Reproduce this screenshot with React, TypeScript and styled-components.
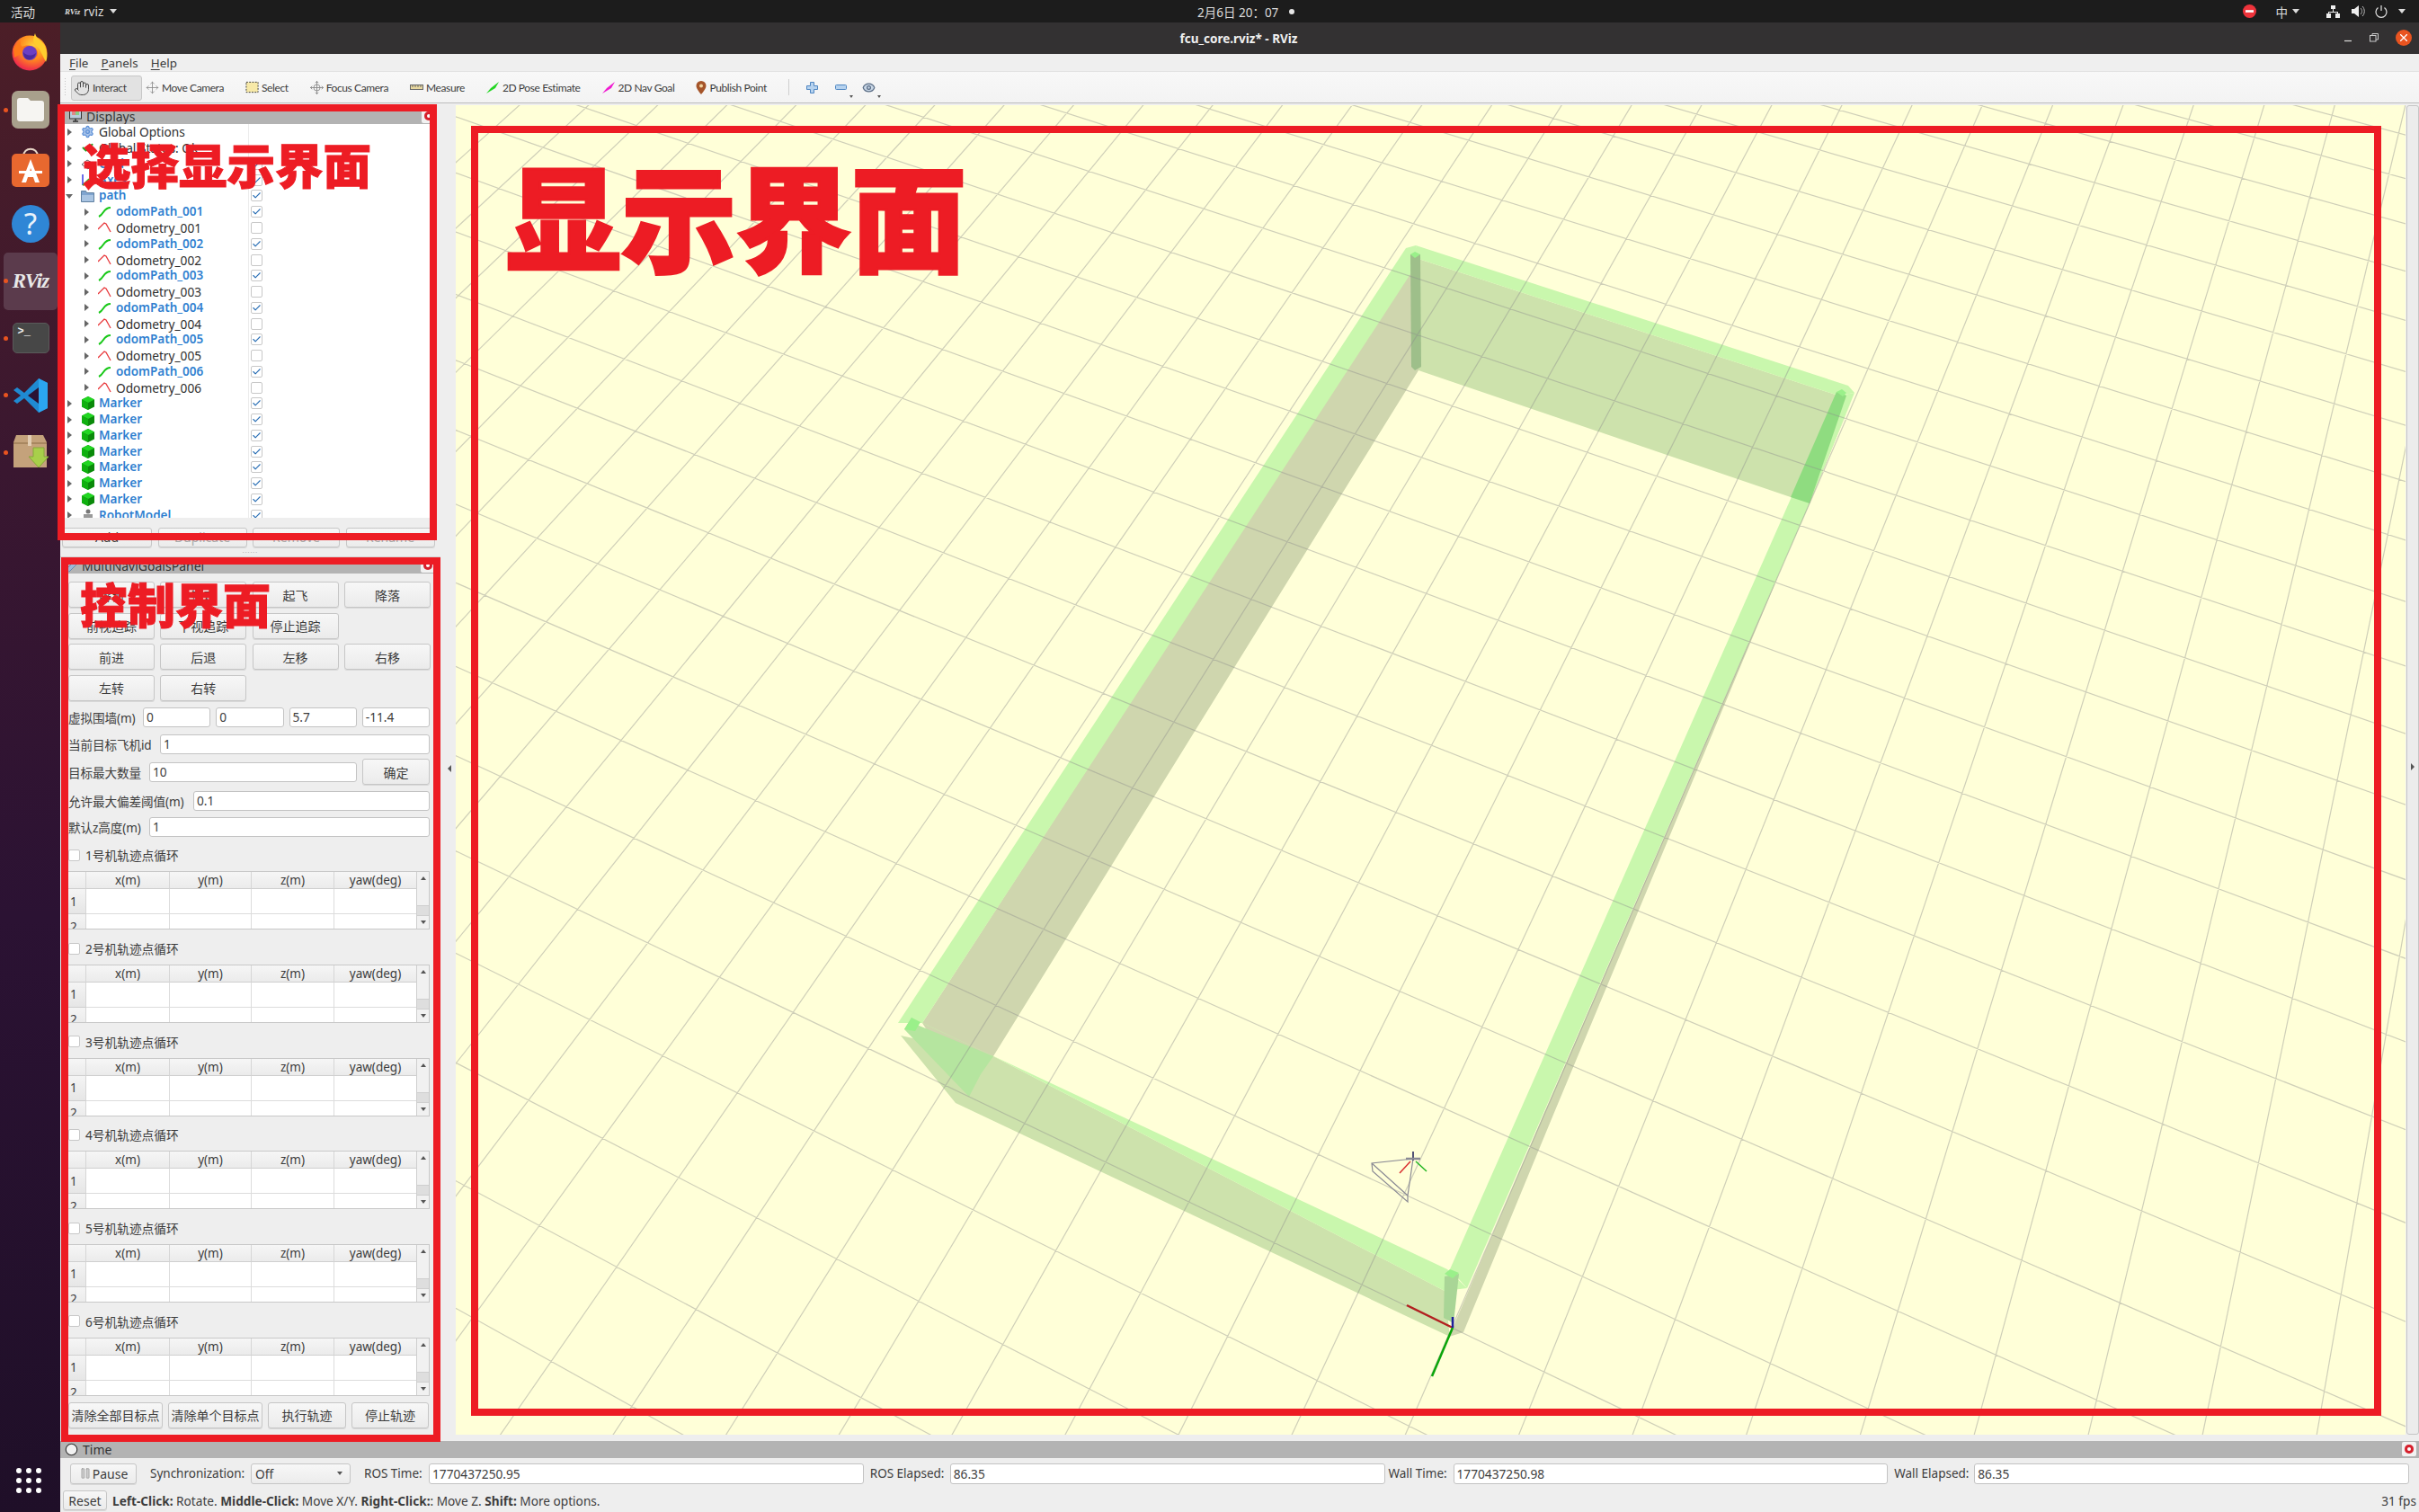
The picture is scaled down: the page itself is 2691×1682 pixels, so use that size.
import React from "react";
import styled, { createGlobalStyle } from "styled-components";
import { Settings, Check, Hand, Move, Eye, Clock, Pause } from "lucide-react";

const UI = `"Noto Sans", "Noto Sans CJK SC", sans-serif`;

const Global = createGlobalStyle`
  html, body { margin: 0; padding: 0; background: #eeeeee; overflow: hidden; }
  * { box-sizing: border-box; }
  body { font-family: ${UI}; color: #3c3c3c; font-size: 13.7px; }
`;

const Page = styled.div`
  position: relative; width: 2691px; height: 1682px; overflow: hidden;
  display: grid; grid-template-columns: 67px 1fr; grid-template-rows: 25px 1fr;
`;

/* ---------- GNOME top bar ---------- */
const TopBar = styled.div`
  grid-column: 1 / 3; background: #1c1c1c; color: #dcdcdc; display: flex; align-items: center;
  position: relative; font-size: 13.5px; padding-left: 12px;
`;
const AppName = styled.div`display: flex; align-items: center; margin-left: 33px; gap: 7px;`;
const TinyLogo = styled.span`font: italic 700 9px "Liberation Serif", serif; color: #ddd; width: 14px;`;
const Caret = styled.span`
  width: 0; height: 0; border-left: 4px solid transparent; border-right: 4px solid transparent;
  border-top: 5px solid #dcdcdc; display: inline-block;
`;
const Clock24 = styled.div`
  position: absolute; left: 1332px; top: 0; height: 25px; display: flex; align-items: center; gap: 12px;
`;
const Dot = styled.span`width: 6px; height: 6px; border-radius: 50%; background: #e6e6e6;`;
const Tray = styled.div`margin-left: auto; display: flex; align-items: center; height: 25px; padding-right: 15px;`;
const TrayItem = styled.span<{ $ml: number }>`display: flex; align-items: center; margin-left: ${p => p.$ml}px;`;

/* ---------- Dock ---------- */
const Dock = styled.div`
  background: linear-gradient(#4c1e27 0%, #3a1730 30%, #2b1233 60%, #1f0f28 100%);
  display: flex; flex-direction: column; align-items: center; padding-top: 2px; position: relative;
`;
const DockSlot = styled.div<{ $active?: boolean; $dot?: boolean }>`
  width: 60px; height: 63.5px; display: flex; align-items: center; justify-content: center; position: relative;
  border-radius: 5px; margin-left: 1px;
  background: ${p => (p.$active ? "#5b3b4c" : "transparent")};
  &::before {
    content: ""; display: ${p => (p.$dot ? "block" : "none")}; position: absolute; left: 0; top: 29px;
    width: 5px; height: 5px; border-radius: 50%; background: #e95420;
  }
`;
const RvizMark = styled.span`
  font: italic 700 23px "Liberation Serif", serif; color: #e9e9e9; letter-spacing: -1px;
`;
const TerminalTile = styled.div`
  width: 41px; height: 34px; background: #474747; border-radius: 5px; color: #eee;
  font: 700 12px "Liberation Mono", monospace; padding: 2px 0 0 5px; border: 1px solid #5a5a5a;
`;
const AppsButton = styled.div`
  position: absolute; bottom: 21px; left: 18px; display: grid; grid-template-columns: repeat(3, 6px); gap: 5px;
  span { width: 6px; height: 6px; border-radius: 50%; background: #fff; }
`;

/* ---------- RViz window ---------- */
const Win = styled.div`display: flex; flex-direction: column; min-width: 0; min-height: 0; background: #eeeeee;`;
const TitleBar = styled.div`
  height: 35px; background: #333132; color: #f0f0f0; font-weight: 700; font-size: 13.5px; position: relative;
  display: flex; align-items: center; justify-content: center; padding-right: 0;
`;
const TitleText = styled.span`margin-left: -2px;`;
const WinBtns = styled.div`position: absolute; right: 8px; top: 8px; display: flex; align-items: center; gap: 19px;`;
const CloseDot = styled.span`
  width: 18px; height: 18px; border-radius: 50%; background: #e95420; display: flex; align-items: center; justify-content: center;
`;
const MenuBar = styled.div`
  height: 20px; background: #efefef; display: flex; align-items: center; padding-left: 10px; gap: 14px;
  font-size: 13.4px; border-bottom: 1px solid #e2e2e2;
  u { text-underline-offset: 2px; }
`;
const ToolBar = styled.div`
  height: 35px; background: linear-gradient(#f8f8f8, #f3f3f3); border-bottom: 1px solid #bcbcbc;
  display: flex; align-items: center; padding-left: 4px;
`;
const Grip = styled.div`
  width: 4px; height: 22px; margin-right: 4px;
  background: radial-gradient(circle, #c4c4c4 0.8px, transparent 1px) 0 0 / 3px 3px;
`;
const ToolItem = styled.div<{ $on?: boolean; $w?: number }>`
  display: flex; align-items: center; gap: 3px; height: 28px; padding: 0 12px;
  font: 12px Lato, "Noto Sans", sans-serif; letter-spacing: -0.4px; white-space: nowrap;
  ${p => (p.$on ? "background:#e2e2e2;border:1px solid #c6c6c6;border-radius:3px;padding:0 2px;margin-right:-8px;" : "")}
  ${p => (p.$w ? `width:${p.$w}px;` : "")}
  margin-top: ${p => (p.$on ? 1 : 0)}px;
`;
const ToolSep = styled.div`width: 1px; height: 18px; background: #cfcfcf; margin: 0 10px 0 12px;`;
const MiniBtn = styled.div`position: relative; width: 31.5px; height: 24px; display: flex; align-items: center; justify-content: center;
  &[data-more]::after {
    content: ""; position: absolute; right: 2px; bottom: 0; border-left: 2.5px solid transparent; border-right: 2.5px solid transparent; border-top: 3px solid #555;
  }
`;

const MainRow = styled.div`height: 1488px; display: flex; min-height: 0;`;
const LeftCol = styled.div`width: 423px; display: flex; flex-direction: column; flex: none;`;

/* panels */
const PanelHead = styled.div<{ $h: number }>`
  height: ${p => p.$h}px; background: #b3b3b3; display: flex; align-items: center; gap: 5px; padding-left: 5px; position: relative;
  font-size: 14px; color: #333; flex: none;
`;
const HeadClose = styled.span<{ $r: number }>`
  position: absolute; right: ${p => p.$r}px; top: 1px; width: 16px; height: 16px; background: #f2f2f2; border-radius: 2px;
  display: flex; align-items: center; justify-content: center;
  &::after { content: ""; width: 10px; height: 10px; border-radius: 50%; background: #d5202c; box-shadow: inset 0 0 0 3px #d5202c, inset 0 0 0 5px #fff; }
`;
const DisplaysPanel = styled.div`height: 495px; padding: 5px 9px 0 5px; display: flex; flex-direction: column; flex: none; padding-right: 8px; margin-right: 4px;`;
const TreeBox = styled.div`
  height: 438px; background: #fff; display: flex; overflow: hidden; position: relative; flex: none; margin-right: -6px;
`;
const TreeRows = styled.div`flex: 1; overflow: hidden; background: linear-gradient(90deg, transparent 204px, #ececec 204px, #ececec 205px, transparent 205px);`;
const TreeRow = styled.div`height: 17.77px; display: flex; align-items: center;`;
const NameCell = styled.div<{ $depth: number }>`
  width: 205px; display: flex; align-items: center; padding-left: ${p => p.$depth * 19 + 1}px; white-space: nowrap;
`;
const Expander = styled.span<{ $open?: boolean }>`
  width: 8px; height: 8px; margin-right: 9px; flex: none; position: relative;
  &::after {
    content: ""; position: absolute; left: ${p => (p.$open ? 0 : 2)}px; top: ${p => (p.$open ? 2 : 0)}px;
    ${p => p.$open
      ? "border-left:4px solid transparent;border-right:4px solid transparent;border-top:5px solid #666;"
      : "border-top:4px solid transparent;border-bottom:4px solid transparent;border-left:5px solid #666;"}
  }
`;
const RowIcon = styled.span`width: 15px; height: 15px; margin-right: 5px; flex: none; display: flex; align-items: center; justify-content: center;`;
const RowName = styled.span<{ $on?: boolean }>`
  color: ${p => (p.$on ? "#2f7fd0" : "#2e2e2e")}; font-weight: ${p => (p.$on ? 600 : 400)};
  font-size: ${p => (p.$on ? 13.5 : 13.7)}px; line-height: 17px;
`;
const CheckCell = styled.div`width: 16px; display: flex; align-items: center; justify-content: center;`;
const Box = styled.span`
  width: 13px; height: 13px; background: #fff; border: 1px solid #c8c8c8; border-radius: 2px; display: flex; align-items: center; justify-content: center; flex: none;
`;
const TreeScroll = styled.div`
  width: 6px; margin-right: 0; border-left: 1px solid #cfcfcf; background: #f4f4f4; position: relative;
`;
const PanelBtns = styled.div`
  display: grid; grid-template-columns: 100px 99px 97px 99px; gap: 6.5px; padding-top: 10.5px; margin-left: -3px; margin-right: -5px;
`;
const Btn = styled.div<{ $off?: boolean; $h?: number }>`
  height: ${p => p.$h ?? 29}px; display: flex; align-items: center; justify-content: center; white-space: nowrap;
  background: linear-gradient(#f7f7f7, #ebebeb); border: 1px solid #c6c6c6; border-radius: 3px; font-size: 14px;
  color: ${p => (p.$off ? "#a8a8a8" : "#3c3c3c")};
  box-shadow: 0 1px 0 #d8d8d8;
`;
const ConfirmBtn = styled(Btn)`width: 75px; flex: none;`;
const Splitter = styled.div`
  height: 10px; flex: none; display: flex; align-items: center; justify-content: center; border-bottom: 1px solid #d4d4d4;
  &::after { content: "······"; font-size: 7px; color: #b0b0b0; letter-spacing: 1px; line-height: 6px; }
`;
const GoalsPanel = styled.div`flex: 1; display: flex; flex-direction: column; min-height: 0; margin-left: 1px;`;
const GoalsBody = styled.div`padding: 9px 12px 0 8px; display: flex; flex-direction: column;`;
const BtnGrid = styled.div`display: grid; grid-template-columns: 96px 96px 96px 96px; column-gap: 6.3px; row-gap: 5.5px;`;
const FormRow = styled.div<{ $mt: number }>`height: 22px; margin-top: ${p => p.$mt}px; display: flex; align-items: center; gap: 6px;`;
const FormLabel = styled.span<{ $w: number }>`width: ${p => p.$w}px; flex: none; white-space: nowrap; font-size: 13.6px; margin-right: -6px; letter-spacing: -0.1px;`;
const Field = styled.div`
  flex: 1; min-width: 0; height: 22px; background: #fff; border: 1px solid #c3c3c3; border-radius: 3px; padding-left: 3px;
  display: flex; align-items: center; font-size: 13.7px; white-space: nowrap;
`;
const CheckRow = styled.div`height: 38.7px; display: flex; align-items: center; gap: 6px; padding-top: 3px; font-size: 13.7px; margin-right: 0;`;
const TableWrap = styled.div`
  height: 65px; border: 1px solid #c8c8c8; border-width: 1px 1px 1px 0; display: grid; grid-template-columns: 1fr 14px; overflow: hidden; background: #fff;
`;
const TableGrid = styled.div`
  display: grid; grid-template-columns: 20px 93px 91px 92px 92px; grid-template-rows: 19px 28px 28px; overflow: hidden;
`;
const HeadCell = styled.div`
  background: linear-gradient(#f6f6f6, #ebebeb); border-right: 1px solid #d6d6d6; border-bottom: 1px solid #cfcfcf;
  display: flex; align-items: center; justify-content: center; font-size: 13.5px;
`;
const RowHead = styled(HeadCell)`justify-content: flex-start; padding-left: 2px; background: linear-gradient(#f4f4f4, #e6e6e6);`;
const Cell = styled.div`border-right: 1px solid #dcdcdc; border-bottom: 1px solid #dcdcdc; background: #fff;`;
const VScroll = styled.div`
  background: #f1f1f1; border-left: 1px solid #cfcfcf; display: flex; flex-direction: column; align-items: center; justify-content: space-between;
  padding: 5px 0; position: relative;
`;
const ScrollThumb = styled.span`
  position: absolute; left: 0; right: 0; top: 37px; height: 12px; background: #dedede; border-top: 1px solid #cfcfcf; border-bottom: 1px solid #cfcfcf;
`;
const TriUp = styled.span`border-left: 3.5px solid transparent; border-right: 3.5px solid transparent; border-bottom: 4px solid #555;`;
const TriDown = styled.span`border-left: 3.5px solid transparent; border-right: 3.5px solid transparent; border-top: 4px solid #555;`;
const FootBtns = styled.div`display: grid; grid-template-columns: 105px 105px 87px 86px; column-gap: 6px; margin-top: 7px;`;

/* center */
const LeftHandle = styled.div`width: 17px; flex: none; display: flex; align-items: center; justify-content: center;
  &::after { content: ""; border-top: 4px solid transparent; border-bottom: 4px solid transparent; border-right: 4px solid #555; margin-left: 3px; margin-bottom: 8px; }
`;
const ViewBox = styled.div`width: 2169px; height: 1479px; margin-top: 2px; background: #ffffd8; flex: none;
  svg { display: block; width: 100%; height: 100%; }
`;
const RightHandle = styled.div`
  width: 14px; height: 1479px; margin: 2px 0 0 1px; border: 1px solid #c6c6c6; border-radius: 3px; background: #ececec;
  display: flex; align-items: center; justify-content: center; flex: none;
  &::after { content: ""; border-top: 4px solid transparent; border-bottom: 4px solid transparent; border-left: 4px solid #555; margin-bottom: 8px; }
`;

/* bottom */
const TimeRow = styled.div`height: 34px; display: flex; align-items: center; padding: 0 11px 0 11px; flex: none;`;
const PauseBtn = styled(Btn)`width: 74px; height: 23px; gap: 1px; flex: none;`;
const TimeLabel = styled.span<{ $w: number; $ml?: number }>`
  width: ${p => p.$w}px; margin-left: ${p => p.$ml ?? 0}px; flex: none; white-space: nowrap; font-size: 13.5px;
`;
const Combo = styled.div`
  width: 111px; height: 23px; border: 1px solid #c6c6c6; border-radius: 3px; background: linear-gradient(#f7f7f7, #ececec);
  display: flex; align-items: center; justify-content: space-between; padding: 0 8px 0 4px; flex: none; font-size: 13.7px;
`;
const TimeField = styled(Field)`height: 23px;`;
const StatusRow = styled.div`height: 26px; display: flex; align-items: center; padding: 0 3px; flex: none; font-size: 13.65px;`;
const ResetBtn = styled(Btn)`width: 49px; height: 22px; margin-right: 6px; flex: none;`;
const Fps = styled.span`margin-left: auto;`;

/* annotation overlays */
const RedFrame = styled.div<{ $l: number; $t: number; $w: number; $h: number }>`
  position: absolute; left: ${p => p.$l}px; top: ${p => p.$t}px; width: ${p => p.$w}px; height: ${p => p.$h}px;
  border: 8px solid #ed1c24; pointer-events: none;
`;
const RedText = styled.div<{ $l: number; $t: number; $s: number; $st: number }>`
  position: absolute; left: ${p => p.$l}px; top: ${p => p.$t}px; font: 900 ${p => p.$s}px/1 "Noto Sans CJK SC", sans-serif;
  color: #ed1c24; white-space: nowrap; -webkit-text-stroke: ${p => p.$st}px #ed1c24;
`;

/* ---------- drawings ---------- */
const Firefox = () => (
  <svg width="44" height="44" viewBox="0 3 44 44">
    <defs>
      <radialGradient id="ff1" cx="0.6" cy="0.3" r="0.85"><stop offset="0" stopColor="#ffd13b" /><stop offset="0.45" stopColor="#ff8a1e" /><stop offset="0.8" stopColor="#f0304a" /><stop offset="1" stopColor="#d81f6c" /></radialGradient>
    </defs>
    <circle cx="21" cy="25" r="19.5" fill="url(#ff1)" />
    <path d="M27 3c1 6 8 8 11 14 3 7 3 14 1 18l-6-12c-2-5-7-6-8-12 0-3 1-5 2-8z" fill="#ffcd2e" />
    <path d="M3 20c2-4 5-7 8-8-1 3 0 5 2 6 3-2 8-2 12 0 4 2 6 6 5 10-3 3-7 5-11 4-5-1-7-4-6-7L4 30z" fill="#ff7a1a" />
    <circle cx="21" cy="25" r="8" fill="#6b3fc4" />
    <path d="M14 24c3 4 9 5 14 1-1 5-5 8-9 7-3 0-5-4-5-8z" fill="#4a2a9c" />
  </svg>
);
const FilesIcon = () => (
  <svg width="42" height="42" viewBox="0 0 42 42">
    <rect width="42" height="42" rx="7" fill="#a8a08c" />
    <path d="M6 11a3 3 0 013-3h9l3 3h12a3 3 0 013 3v17a3 3 0 01-3 3H9a3 3 0 01-3-3z" fill="#f6f5f2" />
  </svg>
);
const SoftwareIcon = () => (
  <svg width="42" height="44" viewBox="0 0 42 44">
    <path d="M13 10c0-11 16-11 16 0" fill="none" stroke="#e9d8c9" strokeWidth="2" />
    <rect y="7" width="42" height="37" rx="5" fill="#e8682f" />
    <path d="M21 13l-10 26h5l2-6h6l2 6h5z M20 28l1-5 2 5z" fill="#fff" fillRule="evenodd" />
    <rect x="8" y="26" width="26" height="3" fill="#fff" />
  </svg>
);
const HelpIcon = () => (
  <svg width="42" height="42" viewBox="0 0 42 42">
    <circle cx="21" cy="21" r="21" fill="#2f86d6" />
    <text x="21" y="33" textAnchor="middle" fontFamily="'Noto Sans', sans-serif" fontSize="33" fill="#e8f2fb">?</text>
  </svg>
);
const VsCode = () => (
  <svg width="40" height="40" viewBox="0 0 40 40">
    <path d="M29 1l10 5v28l-10 5-16-16 -8 6-4-3 8-6-8-6 4-3 8 6z" fill="#1f8ad2" />
    <path d="M29 1l10 5v28l-10 5z" fill="#2ba5f0" />
    <path d="M29 11L17 20l12 9z" fill="#2b1233" />
  </svg>
);
const PackageIcon = () => (
  <svg width="42" height="38" viewBox="0 0 42 38">
    <path d="M5 0h30l4 8v28H2V8z" fill="#c4a27b" />
    <path d="M2 8h37v2H2z" fill="#a88760" />
    <rect x="18" y="0" width="4" height="12" fill="#e2ceb4" />
    <path d="M24 14h12v10h5L30 36 19 24h5z" fill="#a8cf4a" stroke="#86a83a" />
  </svg>
);
const HandIcon = () => <Hand size={18} color="#444" strokeWidth={1.3} />;
const MoveIcon = () => <Move size={15} color="#888" strokeWidth={1.3} />;
const SelectIcon = () => (
  <svg width="15" height="14" viewBox="0 0 16 14"><rect x="1" y="1" width="14" height="12" fill="#f7e9a8" stroke="#333" strokeDasharray="2 1.5" /></svg>
);
const FocusIcon = () => (
  <svg width="15" height="15" viewBox="0 0 17 17" fill="none" stroke="#888"><circle cx="8.5" cy="8.5" r="4" /><path d="M8.5 0v17M0 8.5h17M6.5 2.5l2-2 2 2M6.5 14.5l2 2 2-2M2.5 6.5l-2 2 2 2M14.5 6.5l2 2-2 2" /></svg>
);
const RulerIcon = () => (
  <svg width="15" height="8" viewBox="0 0 15 8"><rect x=".5" y="1.5" width="14" height="5" fill="#e8d8a0" stroke="#666" /><path d="M3 2v2M6 2v2M9 2v2M12 2v2" stroke="#666" /></svg>
);
const Arrow2D = ({ c }: { c: string }) => (
  <svg width="15" height="13" viewBox="0 0 15 13"><path d="M0 13l5-6 9-7-4 7z" fill={c} /></svg>
);
const PinIcon = () => (
  <svg width="12" height="15" viewBox="0 0 12 15"><path d="M6 0a5.5 5.5 0 015.5 5.5C11.500 9 6 15 6 15S.5 9 .5 5.5A5.500 5.500 0 016 0z" fill="#a5552a" /><circle cx="6" cy="5.500" r="2" fill="#f2d5a0" /></svg>
);
const PlusIcon = () => (
  <svg width="13" height="13" viewBox="0 0 13 13"><path d="M4.500.5h4v4h4v4h-4v4h-4v-4h-4v-4h4z" fill="#b6d2ee" stroke="#4f86c2" /></svg>
);
const MinusIcon = () => (
  <svg width="13" height="6" viewBox="0 0 13 6"><rect x=".5" y=".5" width="12" height="5" rx="1" fill="#b6d2ee" stroke="#4f86c2" /></svg>
);
const PathIcon = () => (
  <svg width="15" height="13" viewBox="0 0 15 13"><path d="M1 12c2-1 3-2 5-5s5-5 8-5" fill="none" stroke="#18c818" strokeWidth="2" /></svg>
);
const OdoIcon = () => (
  <svg width="15" height="12" viewBox="0 0 15 12"><path d="M0 8l7-7 2 1 5 9" fill="none" stroke="#e8393c" strokeWidth="1.300" /></svg>
);
const CubeIcon = () => (
  <svg width="14" height="15" viewBox="0 0 14 15">
    <path d="M7 0l7 3.500v8L7 15 0 11.500v-8z" fill="#0a8a0a" />
    <path d="M7 0l7 3.500L7 7 0 3.500z" fill="#22d622" />
    <path d="M0 3.500L7 7v8L0 11.500z" fill="#0fb00f" />
  </svg>
);
const FolderIcon = () => (
  <svg width="15" height="15" viewBox="0 0 15 15"><path d="M.5 2.500h5l1 2h8v10H.5z" fill="#7fa4cf" stroke="#5f7f9f" /><rect x="1" y="7" width="13" height="7" fill="#a9c4e2" /></svg>
);
const GlobeCheck = () => <Check size={15} color="#1fa51f" strokeWidth={3.2} />;
const RobotIcon = () => (
  <svg width="14" height="14" viewBox="0 0 14 14"><circle cx="7" cy="3" r="2.500" fill="#777" /><rect x="2" y="6" width="10" height="5" fill="#999" /><rect x="1" y="11" width="12" height="3" fill="#666" /></svg>
);
const GridIcon = () => (
  <svg width="15" height="13" viewBox="0 0 15 13" fill="none" stroke="#666"><path d="M1 7l6-5 7 4-6 6zM4 4.500l7 4M10 4l-6 5" /></svg>
);
const AxesIcon = () => (
  <svg width="15" height="14" viewBox="0 0 15 14" fill="none"><path d="M2 13V1" stroke="#3a3ae0" strokeWidth="1.500" /><path d="M2 13l12-2" stroke="#e03a3a" strokeWidth="1.500" /><path d="M2 13l7-7" stroke="#2ac02a" strokeWidth="1.500" /></svg>
);
const MonitorIcon = () => (
  <svg width="14" height="14" viewBox="0 0 14 14"><rect x=".5" y="1" width="13" height="9" fill="#bcd" stroke="#333" /><rect x="3" y="2" width="4" height="4" fill="#d88" /><rect x="7" y="2" width="4" height="4" fill="#8c8" /><path d="M4 13h6M7 10v3" stroke="#333" strokeWidth="1.500" /></svg>
);
const PanelGlyph = () => (
  <svg width="13" height="13" viewBox="0 0 13 13"><path d="M1 10L9 2l3 3-8 8H1z" fill="#9db8d8" stroke="#6a8ab0" /></svg>
);
const NoEntry = () => (
  <svg width="15" height="15" viewBox="0 0 15 15"><circle cx="7.500" cy="7.500" r="7.500" fill="#ed333b" /><rect x="3" y="6.200" width="9" height="2.600" fill="#fff" /></svg>
);
const NetIcon = () => (
  <svg width="15" height="14" viewBox="0 0 15 14" fill="#eee"><rect x="5" y="0" width="5" height="4" /><rect x="0" y="9" width="5" height="5" /><rect x="10" y="9" width="5" height="5" /><path d="M7 4h1v3h5v2h-1V8H3v1H2V7h5z" /></svg>
);
const VolIcon = () => (
  <svg width="15" height="15" viewBox="0 0 15 15" fill="none"><path d="M0 5h3l5-4v13l-5-4H0z" fill="#eee" /><path d="M10 4c2 2 2 5 0 7M12 2c3 3 3 8 0 11" stroke="#bbb" /></svg>
);
const PowerIcon = () => (
  <svg width="14" height="14" viewBox="0 0 14 14" fill="none" stroke="#e5e5e5" strokeWidth="1.200"><path d="M7 0v6M3.500 2.500a6 6 0 107 0" /></svg>
);

/* 3D scene: the ground grid is projected with the homography of the wall's four corners */
const A = [1615, 1477], B = [1078, 1220], C = [1578, 412], D = [2013, 560];
function makeProject() {
  const dx1 = B[0] - C[0], dx2 = D[0] - C[0], sx = A[0] - B[0] + C[0] - D[0];
  const dy1 = B[1] - C[1], dy2 = D[1] - C[1], sy = A[1] - B[1] + C[1] - D[1];
  const den = dx1 * dy2 - dx2 * dy1;
  const g = (sx * dy2 - dx2 * sy) / den, h = (dx1 * sy - sx * dy1) / den;
  const a = B[0] - A[0] + g * B[0], b = D[0] - A[0] + h * D[0];
  const d = B[1] - A[1] + g * B[1], e = D[1] - A[1] + h * D[1];
  return (X: number, Y: number) => {
    const s = X / 5.7, t = Y / 11.4, w = 1 + g * s + h * t;
    return [(a * s + b * t + A[0]) / w, (d * s + e * t + A[1]) / w];
  };
}
const project = makeProject();
const gridLines: string[] = [];
const XMIN = -24, XMAX = 40, YMIN = -14, YMAX = 90;
for (let x = XMIN; x <= XMAX; x++) {
  const p = project(x, YMIN), q = project(x, YMAX);
  gridLines.push(`M${p[0].toFixed(1)} ${p[1].toFixed(1)}L${q[0].toFixed(1)} ${q[1].toFixed(1)}`);
}
for (let y = YMIN; y <= YMAX; y++) {
  const p = project(XMIN, y), q = project(XMAX, y);
  gridLines.push(`M${p[0].toFixed(1)} ${p[1].toFixed(1)}L${q[0].toFixed(1)} ${q[1].toFixed(1)}`);
}

const Scene = () => (
  <svg viewBox="507 117 2169 1479" preserveAspectRatio="none">
    {/* right wall shadow */}
    <polygon points="2062,440 1728,1240 1628,1482 1612,1487 1717,1240 2013,560" fill="#cfd6ae" />
    {/* top wall */}
    <polygon points="1578,288 2045,440 2013,560 1992,553 1578,412" fill="#cde2ac" />
    {/* left wall */}
    <polygon points="1578,288 1578,412 1105,1175 1078,1220 1026,1138" fill="#cfd6ae" />
    {/* bottom wall */}
    <polygon points="1002,1152 1105,1175 1607,1436 1613,1487 1063,1227" fill="#cde2ac" />
    {/* top bands */}
    <polygon points="1564,276 1575,273 1580,288 1026,1138 999,1138" fill="#c9f7ad" />
    <polygon points="1575,273 2056,429 2063,437 2045,440 1578,288" fill="#c9f7ad" />
    <polygon points="1014,1132 1610,1412 1632,1433 1607,1436 1105,1175 1026,1138" fill="#c9f7ad" />
    <polygon points="2063,437 2013,560 1632,1433 1613,1412 1992,555 2045,440" fill="#c9f7ad" />
    {/* posts */}
    <polygon points="1569,283 1580,283 1581,408 1574,412 1570,408" fill="#9ebf8a" />
    <polygon points="1569,283 1574,280 1580,283 1574,287" fill="#9af08a" />
    <polygon points="2043,436 2054,440 2013,560 1992,553" fill="#8fdc80" />
    <polygon points="2043,436 2049,433 2054,437 2050,441" fill="#9af08a" />
    <polygon points="1607,1420 1623,1417 1617,1472 1606,1466" fill="#a9d596" />
    <polygon points="1607,1417 1613,1412 1623,1416 1616,1422" fill="#9af08a" />
    <polygon points="1014,1132 1020,1140 1105,1175 1091,1195 1078,1220 1006,1145" fill="#b5e59f" />
    <polygon points="1014,1132 1024,1137 1018,1147 1006,1145" fill="#9af08a" />
    {/* ground grid */}
    <path d={gridLines.join("")} fill="none" stroke="#8c8c8c" strokeOpacity="0.42" strokeWidth="1.2" />
    {/* axes */}
    <path d="M1565 1452L1616 1477" stroke="#b3201f" strokeWidth="2.500" />
    <path d="M1616 1477L1593 1531" stroke="#0aa50a" strokeWidth="2.500" />
    <path d="M1616 1465V1477" stroke="#1c1c9c" strokeWidth="2.500" />
    {/* drone camera frustum */}
    <path d="M1572 1289L1526 1294L1527 1303L1566 1337L1566 1330L1572 1289M1526 1294L1566 1330" fill="none" stroke="#8a8a94" strokeWidth="1.200" />
    <path d="M1569 1292L1557 1305" stroke="#d93030" strokeWidth="1.500" />
    <path d="M1575 1292L1587 1303" stroke="#22b522" strokeWidth="1.500" />
    <path d="M1572 1281V1291" stroke="#40406a" strokeWidth="1.800" />
    <path d="M1564 1289H1580" stroke="#8a8a94" strokeWidth="2.500" />
  </svg>
);

/* ---------- data ---------- */
type TreeItem = { name: string; depth: number; on?: boolean; box?: boolean; icon: React.ReactNode; open?: boolean };
const odom: TreeItem[] = [1, 2, 3, 4, 5, 6].flatMap(n => [
  { name: `odomPath_00${n}`, depth: 1, on: true, box: true, icon: <PathIcon /> },
  { name: `Odometry_00${n}`, depth: 1, on: false, box: true, icon: <OdoIcon /> },
]);
const treeItems: TreeItem[] = [
  { name: "Global Options", depth: 0, icon: <Settings size={15} color="#5b8fd6" fill="#a9c4ea" /> },
  { name: "Global Status: Ok", depth: 0, icon: <GlobeCheck /> },
  { name: "Grid", depth: 0, on: true, box: true, icon: <GridIcon /> },
  { name: "Axes", depth: 0, on: true, box: true, icon: <AxesIcon /> },
  { name: "path", depth: 0, on: true, box: true, open: true, icon: <FolderIcon /> },
  ...odom,
  ...Array.from({ length: 7 }, () => ({ name: "Marker", depth: 0, on: true, box: true, icon: <CubeIcon /> })),
  { name: "RobotModel", depth: 0, on: true, box: true, icon: <RobotIcon /> },
];
const btnRows: string[] = ["解锁", "锁定", "起飞", "降落", "前视追踪", "下视追踪", "停止追踪", "", "前进", "后退", "左移", "右移", "左转", "右转"];

const GoalTable = () => (
  <TableWrap>
    <TableGrid>
      <HeadCell />
      {["x(m)", "y(m)", "z(m)", "yaw(deg)"].map(t => <HeadCell key={t}>{t}</HeadCell>)}
      {[1, 2].map(r => (
        <React.Fragment key={r}>
          <RowHead>{r}</RowHead>
          <Cell /><Cell /><Cell /><Cell />
        </React.Fragment>
      ))}
    </TableGrid>
    <VScroll><TriUp /><ScrollThumb /><TriDown /></VScroll>
  </TableWrap>
);

export default function App() {
  return (
    <Page>
      <Global />
      <TopBar>
        活动
        <AppName><TinyLogo>RViz</TinyLogo>rviz<Caret /></AppName>
        <Clock24>2月6日 20：07<Dot /></Clock24>
        <Tray>
          <NoEntry />
          <TrayItem $ml={22}>中</TrayItem>
          <TrayItem $ml={5}><Caret /></TrayItem>
          <TrayItem $ml={30}><NetIcon /></TrayItem>
          <TrayItem $ml={13}><VolIcon /></TrayItem>
          <TrayItem $ml={11}><PowerIcon /></TrayItem>
          <TrayItem $ml={12}><Caret /></TrayItem>
        </Tray>
      </TopBar>

      <Dock>
        <DockSlot><Firefox /></DockSlot>
        <DockSlot $dot><FilesIcon /></DockSlot>
        <DockSlot><SoftwareIcon /></DockSlot>
        <DockSlot><HelpIcon /></DockSlot>
        <DockSlot $active $dot><RvizMark>RViz</RvizMark></DockSlot>
        <DockSlot $dot><TerminalTile>&gt;_</TerminalTile></DockSlot>
        <DockSlot $dot><VsCode /></DockSlot>
        <DockSlot $dot><PackageIcon /></DockSlot>
        <AppsButton>{Array.from({ length: 9 }, (_, i) => <span key={i} />)}</AppsButton>
      </Dock>

      <Win>
        <TitleBar>
          <TitleText>fcu_core.rviz* - RViz</TitleText>
          <WinBtns>
            <svg width="10" height="10" viewBox="0 0 10 10"><path d="M1 8.500h8" stroke="#ddd" strokeWidth="1.200" /></svg>
            <svg width="10" height="10" viewBox="0 0 10 10" fill="none" stroke="#ccc"><rect x=".5" y="2.500" width="6.500" height="6.500" /><path d="M3 2.500V.5h6.500V7H7" /></svg>
            <CloseDot><svg width="8" height="8" viewBox="0 0 8 8"><path d="M0 0l8 8M8 0L0 8" stroke="#fff" strokeWidth="1.300" /></svg></CloseDot>
          </WinBtns>
        </TitleBar>
        <MenuBar>
          <span><u>F</u>ile</span><span><u>P</u>anels</span><span><u>H</u>elp</span>
        </MenuBar>
        <ToolBar>
          <Grip />
          <ToolItem $on $w={79}><HandIcon />Interact</ToolItem>
          <ToolItem><MoveIcon />Move Camera</ToolItem>
          <ToolItem><SelectIcon />Select</ToolItem>
          <ToolItem><FocusIcon />Focus Camera</ToolItem>
          <ToolItem><RulerIcon />Measure</ToolItem>
          <ToolItem><Arrow2D c="#22d622" />2D Pose Estimate</ToolItem>
          <ToolItem><Arrow2D c="#f01ad0" />2D Nav Goal</ToolItem>
          <ToolItem><PinIcon />Publish Point</ToolItem>
          <ToolSep />
          <MiniBtn><PlusIcon /></MiniBtn>
          <MiniBtn data-more="1"><MinusIcon /></MiniBtn>
          <MiniBtn data-more="1"><Eye size={15} color="#5a6d85" fill="#c8d6e6" /></MiniBtn>
        </ToolBar>

        <MainRow>
          <LeftCol>
            <DisplaysPanel>
              <PanelHead $h={18}><MonitorIcon />Displays<HeadClose $r={-7} /></PanelHead>
              <TreeBox>
                <TreeRows>
                  {treeItems.map((it, i) => (
                    <TreeRow key={i}>
                      <NameCell $depth={it.depth}>
                        <Expander $open={it.open} />
                        <RowIcon>{it.icon}</RowIcon>
                        <RowName $on={it.on}>{it.name}</RowName>
                      </NameCell>
                      {it.box && (
                        <CheckCell>
                          <Box>{it.on && <Check size={11} color="#2a6fb5" strokeWidth={2.4} />}</Box>
                        </CheckCell>
                      )}
                    </TreeRow>
                  ))}
                </TreeRows>
                <TreeScroll />
              </TreeBox>
              <PanelBtns>
                <Btn $h={22}>Add</Btn>
                <Btn $h={22} $off>Duplicate</Btn>
                <Btn $h={22} $off>Remove</Btn>
                <Btn $h={22} $off>Rename</Btn>
              </PanelBtns>
            </DisplaysPanel>
            <Splitter />
            <GoalsPanel>
              <PanelHead $h={18}><PanelGlyph />MultiNaviGoalsPanel<HeadClose $r={6} /></PanelHead>
              <GoalsBody>
                <BtnGrid>
                  {btnRows.map((t, i) => (t ? <Btn key={i}>{t}</Btn> : <span key={i} />))}
                </BtnGrid>
                <FormRow $mt={7}>
                  <FormLabel $w={83}>虚拟围墙(m)</FormLabel>
                  <Field>0</Field><Field>0</Field><Field>5.7</Field><Field>-11.4</Field>
                </FormRow>
                <FormRow $mt={8}>
                  <FormLabel $w={102}>当前目标飞机id</FormLabel>
                  <Field>1</Field>
                </FormRow>
                <FormRow $mt={9}>
                  <FormLabel $w={90}>目标最大数量</FormLabel>
                  <Field>10</Field>
                  <ConfirmBtn>确定</ConfirmBtn>
                </FormRow>
                <FormRow $mt={10}>
                  <FormLabel $w={139}>允许最大偏差阈值(m)</FormLabel>
                  <Field>0.1</Field>
                </FormRow>
                <FormRow $mt={7}>
                  <FormLabel $w={90}>默认z高度(m)</FormLabel>
                  <Field>1</Field>
                </FormRow>
                {[1, 2, 3, 4, 5, 6].map(n => (
                  <React.Fragment key={n}>
                    <CheckRow><Box />{n}号机轨迹点循环</CheckRow>
                    <GoalTable />
                  </React.Fragment>
                ))}
                <FootBtns>
                  <Btn>清除全部目标点</Btn>
                  <Btn>清除单个目标点</Btn>
                  <Btn>执行轨迹</Btn>
                  <Btn>停止轨迹</Btn>
                </FootBtns>
              </GoalsBody>
            </GoalsPanel>
          </LeftCol>
          <LeftHandle />
          <ViewBox><Scene /></ViewBox>
          <RightHandle />
        </MainRow>

        <PanelHead $h={19}>
          <Clock size={15} color="#333" strokeWidth={1.8} fill="#f2f2f2" />Time<HeadClose $r={3} />
        </PanelHead>
        <TimeRow>
          <PauseBtn><Pause size={14} color="#888" fill="#ccc" strokeWidth={1} />Pause</PauseBtn>
          <TimeLabel $w={112} $ml={15}>Synchronization:</TimeLabel>
          <Combo>Off<TriDown /></Combo>
          <TimeLabel $w={72} $ml={15}>ROS Time:</TimeLabel>
          <TimeField>1770437250.95</TimeField>
          <TimeLabel $w={89} $ml={7}>ROS Elapsed:</TimeLabel>
          <TimeField>86.35</TimeField>
          <TimeLabel $w={72} $ml={4}>Wall Time:</TimeLabel>
          <TimeField>1770437250.98</TimeField>
          <TimeLabel $w={89} $ml={7}>Wall Elapsed:</TimeLabel>
          <TimeField>86.35</TimeField>
        </TimeRow>
        <StatusRow>
          <ResetBtn>Reset</ResetBtn>
          <span><b>Left-Click:</b> Rotate. <b>Middle-Click:</b> Move X/Y. <b>Right-Click:</b>: Move Z. <b>Shift:</b> More options.</span>
          <Fps>31 fps</Fps>
        </StatusRow>
      </Win>

      <RedFrame $l={64} $t={116} $w={422} $h={485} />
      <RedFrame $l={68} $t={620} $w={422} $h={984} />
      <RedFrame $l={524} $t={140} $w={2125} $h={1435} />
      <RedText $l={92} $t={155} $s={53.500} $st={1}>选择显示界面</RedText>
      <RedText $l={89} $t={645} $s={53} $st={1}>控制界面</RedText>
      <RedText $l={563} $t={174} $s={128} $st={3}>显示界面</RedText>
    </Page>
  );
}
